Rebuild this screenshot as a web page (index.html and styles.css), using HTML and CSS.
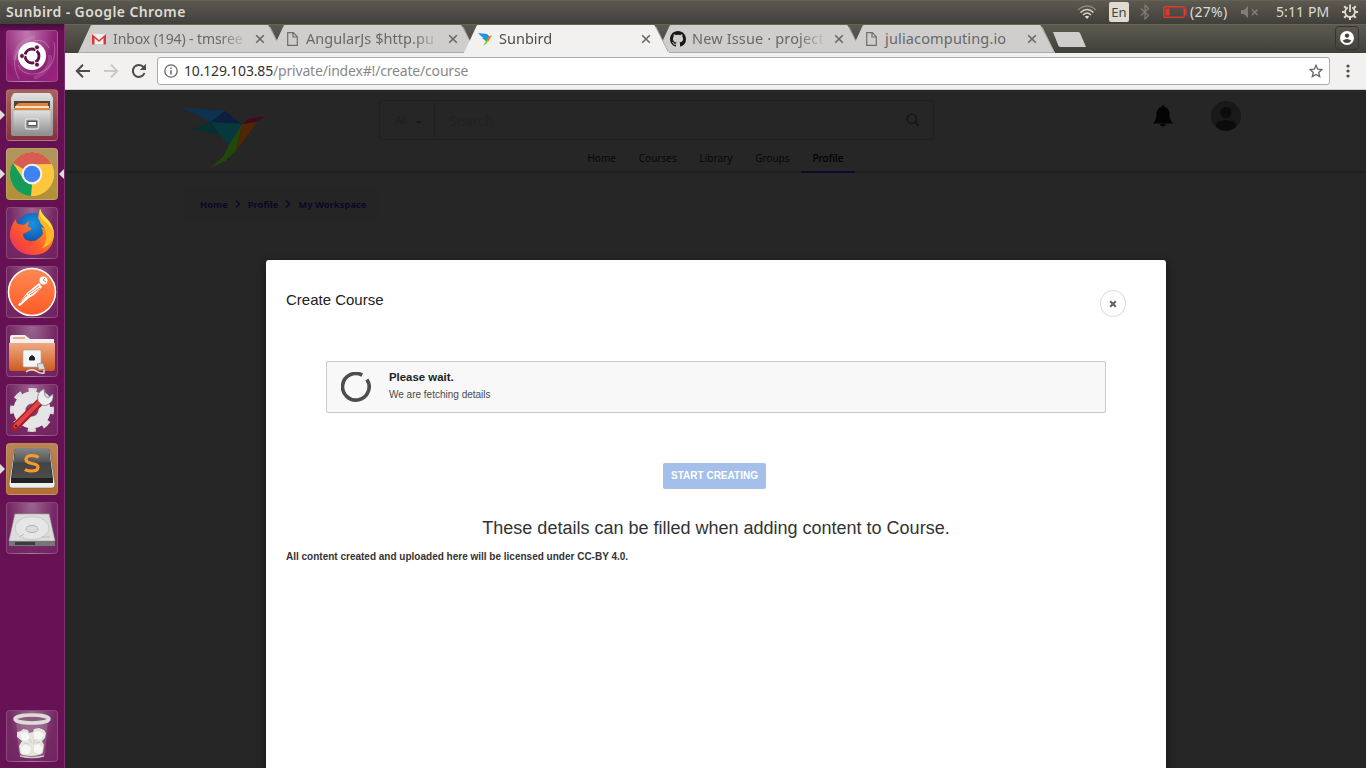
FILE: index.html
```html
<!DOCTYPE html>
<html lang="en">
<head>
<meta charset="utf-8">
<title>Sunbird</title>
<link rel="stylesheet" href="styles.css">
</head>
<body>
<svg class="defs" width="0" height="0" aria-hidden="true">
  <defs>
    <linearGradient id="metal" x1="0" y1="0" x2="0" y2="1"><stop offset="0" stop-color="#e2e2e2"/><stop offset="1" stop-color="#8d8d8d"/></linearGradient>
    <linearGradient id="orange" x1="0" y1="0" x2="0" y2="1"><stop offset="0" stop-color="#f0a880"/><stop offset="1" stop-color="#cf5a20"/></linearGradient>
    <linearGradient id="postman" x1="0" y1="0" x2="0" y2="1"><stop offset="0" stop-color="#ff8a52"/><stop offset="1" stop-color="#ff5a26"/></linearGradient>
    <linearGradient id="fox" x1="0" y1="1" x2="1" y2="0"><stop offset="0" stop-color="#e8256a"/><stop offset=".4" stop-color="#ff5a2c"/><stop offset=".75" stop-color="#ff9a1c"/><stop offset="1" stop-color="#ffe53a"/></linearGradient>
    <linearGradient id="key" x1="0" y1="0" x2="0" y2="1"><stop offset="0" stop-color="#858585"/><stop offset=".45" stop-color="#565656"/><stop offset=".5" stop-color="#444"/><stop offset="1" stop-color="#4c4c4c"/></linearGradient>
    <radialGradient id="globe" cx=".5" cy=".3" r=".7"><stop offset="0" stop-color="#1496e8"/><stop offset="1" stop-color="#123a90"/></radialGradient>
    <symbol id="x" viewBox="0 0 10 10"><path d="M1.200 1.200l7.600 7.600M8.800 1.200l-7.600 7.600" stroke="#686868" stroke-width="1.600" fill="none"/></symbol>
    <symbol id="doc" viewBox="0 0 16 16"><path d="M2.700 1.700h5.600l4 4v8.600H2.700zM8 1.700v4.300h4.300" fill="none" stroke="#6d6d6d" stroke-width="1.200"/></symbol>
    <symbol id="tab" viewBox="0 0 206 29"><path d="M0 29L12.500 2Q13 1 14 1H189.500Q190.500 1 191 2L205 29z"/><path class="edge" d="M0 28.500H204.500L192 3" fill="none"/></symbol>
    <symbol id="bird" viewBox="0 0 86 62">
      <path d="M0 0L44 4 30 15z" fill="#0f3150"/><path d="M44 4L61 17 30 15z" fill="#0d1f40"/>
      <path d="M30 15L11 22 39 28z" fill="#053034"/><path d="M30 15L61 17 48 38 39 28z" fill="#06383d"/>
      <path d="M61 17L55 44 44 54 29 61 42 50 48 38z" fill="#20480c"/><path d="M61 17L76 15 56 43z" fill="#522504"/><path d="M61 17L68 12 85 9 74 15z" fill="#48061a"/>
    </symbol>
  </defs>
</svg>

<div class="desktop">
  <header class="panel">
    <span class="panel-title">Sunbird - Google Chrome</span>
    <div class="indicators">
      <svg class="i-wifi" width="20" height="16" viewBox="0 0 20 16"><g fill="none" stroke="#d6d2c9" stroke-width="1.500"><path d="M1 6Q10-2 19 6" stroke="#8a877e"/><path d="M3.500 8.500Q10 2.500 16.500 8.500"/><path d="M6 11Q10 7 14 11"/></g><path d="M7.800 12.500Q10 10.800 12.200 12.500L10 15z" fill="#dfdbd2"/></svg>
      <span class="i-lang">En</span>
      <svg class="i-bt" width="10" height="16" viewBox="0 0 10 16"><path d="M1 4.500l7.500 7L5 15V1l3.500 3.500L1 11.500" fill="none" stroke="#817e76" stroke-width="1.200"/></svg>
      <svg class="i-bat" width="24" height="12" viewBox="0 0 24 12"><rect x=".8" y=".8" width="20.400" height="10.400" rx="1" fill="none" stroke="#df382c" stroke-width="1.400"/><path d="M21 3h2.500v6H21" fill="#df382c"/><rect x="2.500" y="2.500" width="4" height="7" fill="#df382c"/></svg>
      <span class="i-pct">(27%)</span>
      <svg class="i-vol" width="18" height="12" viewBox="0 0 18 12"><path d="M0 4h3l4-4v12L3 8H0z" fill="#817e76"/><path d="M11 3.500l5.500 5.500m0-5.500L11 9" stroke="#817e76" stroke-width="1.600"/></svg>
      <span class="i-time">5:11 PM</span>
      <svg class="i-gear" width="16" height="16" viewBox="0 0 16 16"><path d="M5.800 3.500A5 5 0 1 0 10.200 3.500" fill="none" stroke="#dfdbd2" stroke-width="1.800"/><path d="M0 8h3m10 0h3M8 13v3M2.200 2.200l2 2m7.600 7.600l2 2M2.200 13.800l2-2m7.600-7.600l2-2" stroke="#dfdbd2" stroke-width="2"/><path d="M8 .5V8" stroke="#dfdbd2" stroke-width="1.800"/></svg>
    </div>
  </header>

  <div class="workspace">
    <nav class="launcher">
      <div class="tile dash"><svg viewBox="0 0 52 52"><g fill="none" stroke="#fff" stroke-opacity=".22"><path d="M13 49Q1 25 21 13Q38 6 43 18M48 12Q52 37 33 43Q17 47 12 35" stroke-width="1.200"/><path d="M9 30Q9 12 29 7M44 25Q45 41 28 48" stroke-width="4" stroke-opacity=".13"/></g><circle cx="26" cy="26" r="14" fill="#fff"/><circle cx="26" cy="26" r="7" fill="none" stroke="#5e1445" stroke-width="2.800" stroke-dasharray="13.300 1.360" stroke-dashoffset="6"/><g fill="#5e1445" stroke="#fff" stroke-width=".7"><circle cx="16" cy="26" r="2.400"/><circle cx="31" cy="17.300" r="2.400"/><circle cx="31" cy="34.700" r="2.400"/></g></svg></div>
      <div class="tile files open"><svg viewBox="0 0 52 52"><path d="M7 5q1-1 2-1h34q1 0 2 1l2 4v36q0 2-2 2H7q-2 0-2-2V9z" fill="url(#metal)"/><path d="M8 12h36v12H8z" fill="#4b4540"/><path d="M10 16l3-2h29v8H10z" fill="#e8803a"/><path d="M9 17h34v4H9z" fill="#fbe4c4"/><path d="M8 19h36v3H8z" fill="#f08428"/><path d="M7 21h38v25H7z" fill="url(#metal)" stroke="#999" stroke-width=".6"/><rect x="19.500" y="30" width="13" height="10" rx="2" fill="#8a8a8a" stroke="#dcdcdc" stroke-width="1.500"/><rect x="22" y="32.500" width="8.500" height="4" fill="#fff" stroke="#555"/></svg></div>
      <div class="tile chrome open active"><svg viewBox="0 0 52 52"><circle cx="26" cy="26" r="22" fill="#fbc941"/><path d="M26 26L6.900 15A22 22 0 0 1 45.700 16.200H27z" fill="#d85c50"/><path d="M6.900 15L17.300 31 26 37 25 48A22 22 0 0 1 6.900 15z" fill="#169c5a"/><path d="M25 48L35 31 35 16.200H45.700A22 22 0 0 1 25 48z" fill="#fcc73c"/><circle cx="26" cy="26" r="10.300" fill="#f3f3f3"/><circle cx="26" cy="26" r="8.300" fill="#3f82f0"/></svg></div>
      <div class="tile"><svg viewBox="0 0 52 52"><circle cx="27" cy="24" r="18" fill="url(#globe)"/><path d="M34 2q1 4 5 8 10 9 9 19-2 18-20 19Q9 48 4 31 3 20 10 12q0 4 2 5l6 1 5-4-1 6q3 0 4 2l-5 3-4 2q0 6 7 7 5 1 8-2 8-5 3-12l3 1q-1-7-6-9 0-5 2-10z" fill="url(#fox)"/><path d="M34 2q1 4 5 8 10 9 9 19-3 10-12 12 8-10 2-21-5-4-5-10z" fill="#ffb52a"/><path d="M34 2q1 4 5 8 7 6 8 14l-6-8q-9-5-7-14z" fill="#ffe14a"/><path d="M12 32q7 7 16 1l-2 4q-7 5-12 1z" fill="#f64c32"/></svg></div>
      <div class="tile"><svg viewBox="0 0 52 52"><circle cx="26" cy="26" r="23.500" fill="url(#postman)" stroke="#fff" stroke-width="1.500"/><circle cx="37.500" cy="14.500" r="4" fill="#fff"/><path d="M39 12l-2 2 3 2" fill="none" stroke="#f47a48"/><path d="M33 17l3 4-8 8-5 3-9 8-2-1 8-11 2-2z" fill="#fff"/><path d="M33 20L22 28m12-6l-10 7M21 29l-7 8" stroke="#f98058" stroke-width="1"/></svg></div>
      <div class="tile"><svg viewBox="0 0 52 52"><path d="M4 12q0-2 2-2h13l5 4h24v10H4z" fill="#f3efec"/><path d="M7 13h12" stroke="#ef9a70" stroke-width="1.500"/><path d="M3 18h46v25q0 3-3 3H6q-3 0-3-3z" fill="url(#orange)"/><rect x="17" y="25" width="18" height="17" rx="1.500" fill="#f5f5f5" stroke="#aaa" stroke-width=".7"/><path d="M23.500 35v-2.500l2.500-2 2.500 2V35z" fill="#222" stroke="#222"/><path d="M20 47q5-4 10-1 4 3 8 2v-6" fill="none" stroke="#ddd" stroke-width="1.500"/><path d="M31 39l6-1 2 6-6 1z" fill="#ddd" stroke="#777" stroke-width=".6"/></svg></div>
      <div class="tile"><svg viewBox="0 0 52 52"><circle cx="26" cy="26" r="19.500" fill="none" stroke="#dedede" stroke-width="5" stroke-dasharray="8 7.315" stroke-dashoffset="4"/><circle cx="26" cy="26" r="12.500" fill="none" stroke="#e5e5e5" stroke-width="12"/><path d="M9 43L34 18" stroke="#a81d25" stroke-width="8" stroke-linecap="round"/><path d="M9.500 42L34 17.500" stroke="#df4449" stroke-width="4.500" stroke-linecap="round"/><path d="M32 17q-2-9 6-12l1 7 3 2 5-4q1 8-6 11-3 1-5 0l-4-4z" fill="#eee" stroke="#888" stroke-width=".9"/><circle cx="10" cy="42" r="1.300" fill="#7d1519"/></svg></div>
      <div class="tile sublime open"><svg viewBox="0 0 52 52"><path d="M8 8L3 41q0 4 3 4h40q3 0 3-4L44 8z" fill="#eee" stroke="#555" stroke-width=".5"/><path d="M9 6h34l4 30v4H5v-4z" fill="#222"/><path d="M11 5h30q2 0 2 2l3 28H6L9 7q0-2 2-2z" fill="url(#key)"/><path d="M32.500 14.500Q30 12.500 26 12.500q-6 0-6 4 0 3 6 4 6.500 1 6 4-.5 3.500-6 3.500-5 0-7-1.500" fill="none" stroke="#f99a2c" stroke-width="3.200"/></svg></div>
      <div class="tile"><svg viewBox="0 0 52 52"><path d="M9 12h34l6 27H3z" fill="#dcdcdc" stroke="#aaa" stroke-width=".6"/><ellipse cx="26" cy="26" rx="17" ry="11.500" fill="#e6e6e6" stroke="#c2c2c2" stroke-width=".8"/><ellipse cx="26" cy="27" rx="6" ry="3.500" fill="#ddd" stroke="#b0b0b0"/><path d="M3 39h46v5H3z" fill="#777"/><path d="M9 40h20v3H9z" fill="#3c3c3c"/><path d="M13 35l5-3m18 3h8" stroke="#bbb"/></svg></div>
      <div class="tile trash"><svg viewBox="0 0 52 52"><path d="M10 9l3 36q13 4 26 0l3-36z" fill="#dcd5dc" fill-opacity=".2"/><path d="M11 22l4-1 2-2 5 1 1 3 4-1 1-3 5-1 5 2 2 3-1 5-3 3 2 4-1 7q0 3-11 4-11 0-12-3l-1-7 3-5-5-4z" fill="#e4e4df"/><path d="M14 23l6-1 4 5-3 4-5-1zM28 22l6-1 4 4-4 5-6-2zM15 37l5-3 5 4-2 6-7 0zM28 35l5-1 4 4-3 6-6-2z" fill="#f6f6f3"/><path d="M23 29l3 4m3-3l-2 4m-9-1l4 1m8-1l4-1" stroke="#c4c4c0" stroke-width=".8" fill="none"/><ellipse cx="26" cy="9" rx="17" ry="4" fill="#8b5b82" stroke="#dcdcd8" stroke-width="3.500"/><path d="M14 46q12 3 24 0" stroke="#ccc" stroke-width="1.300" fill="none"/></svg></div>
    </nav>

    <div class="browser">
      <div class="tabstrip">
        <div class="tab"><svg class="shape"><use href="#tab"/></svg><svg class="fav gmail" viewBox="0 0 16 16"><path d="M1 3h14v10H1z" fill="#efefef"/><path d="M1 13.500V3l7 6 7-6v10.500h-2.500V7L8 11 3.500 7v6.500z" fill="#d93a35"/></svg><span class="label w1">Inbox (194) - tmsree</span><svg class="close"><use href="#x"/></svg></div>
        <div class="tab"><svg class="shape"><use href="#tab"/></svg><svg class="fav"><use href="#doc"/></svg><span class="label w2">AngularJs $http.pu</span><svg class="close"><use href="#x"/></svg></div>
        <div class="tab current"><svg class="shape"><use href="#tab"/></svg><svg class="fav" viewBox="0 0 16 16"><path d="M0 2l9 1 3 3-5 2-4-3z" fill="#238ee8"/><path d="M4 7l8-1-3 5z" fill="#13a6b4"/><path d="M11 6l-2 6-4 3 3-5z" fill="#68cf19"/><path d="M10 6l4-2-4 7z" fill="#f37316"/></svg><span class="label w3">Sunbird</span><svg class="close"><use href="#x"/></svg></div>
        <div class="tab"><svg class="shape"><use href="#tab"/></svg><svg class="fav octo" viewBox="0 0 16 16"><path fill="#181616" d="M8 0C3.580 0 0 3.580 0 8c0 3.540 2.290 6.530 5.470 7.590.4.070.55-.17.55-.38 0-.19-.01-.82-.01-1.490-2.010.37-2.530-.49-2.690-.94-.09-.23-.48-.94-.82-1.130-.28-.15-.68-.52-.01-.53.63-.01 1.080.58 1.230.82.72 1.210 1.870.87 2.330.66.07-.52.28-.87.51-1.070-1.780-.2-3.640-.89-3.640-3.950 0-.87.31-1.590.82-2.150-.08-.2-.36-1.020.08-2.120 0 0 .67-.21 2.200.82.64-.18 1.320-.27 2-.27s1.360.09 2 .27c1.530-1.040 2.200-.82 2.200-.82.44 1.100.16 1.920.08 2.120.51.56.82 1.270.82 2.150 0 3.070-1.870 3.750-3.650 3.950.29.25.54.73.54 1.480 0 1.070-.01 1.930-.01 2.200 0 .21.15.46.55.38A8.010 8.010 0 0 0 16 8c0-4.420-3.580-8-8-8z"/></svg><span class="label w4">New Issue · project-</span><svg class="close"><use href="#x"/></svg></div>
        <div class="tab"><svg class="shape"><use href="#tab"/></svg><svg class="fav"><use href="#doc"/></svg><span class="label w5">juliacomputing.io</span><svg class="close"><use href="#x"/></svg></div>
        <svg class="newtab" width="33" height="15" viewBox="0 0 33 15"><path d="M0 0H25q1 0 2 1L33 15H8q-2 0-2.500-1z" fill="#d0cecd"/></svg>
        <div class="profile-btn"><svg width="14" height="14" viewBox="0 0 14 14"><circle cx="7" cy="7" r="7" fill="#fff"/><circle cx="7" cy="4.600" r="2.200" fill="#45443e"/><path d="M2.700 9.500q4.300-3 8.600 0-1.500 2.500-4.300 2.500t-4.300-2.500z" fill="#45443e"/></svg></div>
      </div>

      <div class="toolbar">
        <svg class="nav-i" width="16" height="16" viewBox="0 0 16 16"><path d="M15 8H2.500M8 1.800L1.800 8 8 14.200" fill="none" stroke="#4c4c4c" stroke-width="2"/></svg>
        <svg class="nav-i" width="16" height="16" viewBox="0 0 16 16"><path d="M1 8h12.500M8 1.800L14.200 8 8 14.200" fill="none" stroke="#c9c9c9" stroke-width="2"/></svg>
        <svg class="nav-i" width="16" height="16" viewBox="0 0 16 16"><path d="M13.500 10A6 6 0 1 1 12.600 4.200" fill="none" stroke="#4c4c4c" stroke-width="2"/><path d="M15 .8V7H8.800z" fill="#4c4c4c"/></svg>
        <div class="omnibox">
          <svg width="14" height="14" viewBox="0 0 14 14"><circle cx="7" cy="7" r="6.200" fill="none" stroke="#666" stroke-width="1.300"/><path d="M7 6.200v4.300M7 3.400v1.500" stroke="#666" stroke-width="1.500"/></svg>
          <span class="url"><b>10.129.103.85</b>/private/index#!/create/course</span>
          <svg class="star" width="14" height="14" viewBox="0 0 14 14"><path d="M7 1.300l1.700 3.900 4.200.4-3.200 2.800 1 4.200L7 10.400l-3.700 2.200 1-4.200L1.100 5.600l4.200-.4z" fill="none" stroke="#666" stroke-width="1.300"/></svg>
        </div>
        <svg class="menu" width="4" height="14" viewBox="0 0 4 14"><g fill="#4c4c4c"><circle cx="2" cy="2" r="1.600"/><circle cx="2" cy="7" r="1.600"/><circle cx="2" cy="12" r="1.600"/></g></svg>
      </div>

      <main class="page">
        <header class="site-head">
          <svg class="logo" width="86" height="62"><use href="#bird"/></svg>
          <div class="center">
            <div class="search"><span class="all">All<i class="caret"></i></span><span class="query">Search</span><svg width="14" height="14" viewBox="0 0 14 14"><circle cx="5.800" cy="5.800" r="4.600" fill="none" stroke="#181818" stroke-width="1.800"/><path d="M9 9l4 4" stroke="#181818" stroke-width="2"/></svg></div>
            <nav class="site-nav"><a>Home</a><a>Courses</a><a>Library</a><a>Groups</a><a class="on">Profile</a></nav>
          </div>
          <svg class="bell" width="20" height="22" viewBox="0 0 20 22"><path d="M8.500 2q0-2 1.500-2t1.500 2q5 1 5 7.500 0 5 3.500 9H0q3.500-4 3.500-9Q3.500 3 8.500 2zM7 19h6q-.5 2.500-3 2.500T7 19z" fill="#040404"/></svg>
          <svg class="avatar" width="30" height="30" viewBox="0 0 30 30"><defs><clipPath id="av"><circle cx="15" cy="15" r="15"/></clipPath></defs><g clip-path="url(#av)"><path d="M0 0h30v30H0z" fill="#191919"/><circle cx="15" cy="11.500" r="5.500" fill="#0c0c0c"/><ellipse cx="15" cy="24.500" rx="10" ry="5.500" fill="#0c0c0c"/></g></svg>
        </header>
        <div class="crumbs"><span>Home</span><svg viewBox="0 0 6 8"><path d="M1 .5L4.500 4 1 7.500"/></svg><span>Profile</span><svg viewBox="0 0 6 8"><path d="M1 .5L4.500 4 1 7.500"/></svg><span>My Workspace</span></div>
        <section class="modal">
          <div class="modal-head"><h1>Create Course</h1><button class="modal-close"><svg width="8" height="8" viewBox="0 0 8 8"><path d="M1.200 1.200l5.600 5.600m0-5.600L1.200 6.800" stroke="#666" stroke-width="2.300"/></svg></button></div>
          <div class="message">
            <svg width="30" height="30" viewBox="0 0 30 30"><path d="M21.200 3.100A13.300 13.300 0 1 0 25.900 7.400" fill="none" stroke="#4d4d4d" stroke-width="3.600"/></svg>
            <div class="message-text"><strong>Please wait.</strong><p>We are fetching details</p></div>
          </div>
          <button class="start">START CREATING</button>
          <h2>These details can be filled when adding content to Course.</h2>
          <p class="license">All content created and uploaded here will be licensed under CC-BY 4.0.</p>
        </section>
      </main>
    </div>
  </div>
</div>
</body>
</html>
```
FILE: styles.css
```css
* { box-sizing: border-box; }
body { margin: 0; overflow: hidden; font-family: "Noto Sans", sans-serif; }
.defs { position: absolute; }
h1, h2, p { margin: 0; font-weight: normal; }
button { padding: 0; border: 0; font: inherit; }
svg { flex: none; display: block; }

.desktop { width: 1366px; height: 768px; display: flex; flex-direction: column; overflow: hidden; }
.panel { height: 24px; flex: none; display: flex; align-items: center; justify-content: space-between; padding: 0 8px 2px 6px; background: linear-gradient(#5b5950, #403f3a); border-top: 1px solid #65624f; color: #dfdbd2; white-space: nowrap; }
.panel-title { font-size: 14px; font-weight: 600; letter-spacing: .4px; line-height: 22px; }
.indicators { display: flex; align-items: center; font-size: 14px; line-height: 22px; }
.i-lang { width: 20px; height: 20px; margin: 0 11px 0 12px; border-radius: 2px; background: #dfdbd2; color: #45443e; font-size: 13px; line-height: 20px; text-align: center; }
.i-bat { margin-left: 13px; }
.i-pct { width: 54px; padding-left: 3px; letter-spacing: .3px; }
.i-time { width: 66px; margin-left: 17px; letter-spacing: .1px; }

.workspace { flex: 1; min-height: 0; display: flex; }
.launcher { width: 65px; flex: none; display: flex; flex-direction: column; gap: 7px; padding: 6px; background: linear-gradient(#40103a 0, #651052 7px, #661254 100%); border-right: 1px solid #803070; }
.tile { position: relative; width: 52px; height: 52px; flex: none; border: 1px solid rgba(255,255,255,.16); border-radius: 4px; background: radial-gradient(ellipse at 50% 0, rgba(255,255,255,.36), rgba(255,255,255,.1) 65%, rgba(255,255,255,.08)); }
.tile svg { width: 52px; height: 52px; margin: -1px; }
.dash { background: radial-gradient(ellipse at 40% 0, #c17ab0, #8f2075 65%, #9a2481); }
.files { background: linear-gradient(#a8625e, #85323f); }
.chrome { background: linear-gradient(#ae9660, #b39134); }
.sublime { background: linear-gradient(#b78556, #b56f30); }
.trash { margin-top: auto; }
.open::before { content: ""; position: absolute; left: -7px; top: 20px; border: 5px solid transparent; border-left-color: #ddd; border-right: 0; }
.active::after { content: ""; position: absolute; right: -7px; top: 20px; border: 5px solid transparent; border-right-color: #ddd; border-left: 0; }

.browser { flex: 1; min-width: 0; display: flex; flex-direction: column; }
.tabstrip { height: 29px; flex: none; display: flex; padding-left: 13px; background: linear-gradient(#5c5a50, #403f3a); border-top: 1px solid #67644f; }
.tab { position: relative; width: 205px; height: 29px; margin: -1px -12px 0 0; padding: 1px 0 0 14px; flex: none; display: flex; align-items: center; color: #686868; font-size: 14.500px; }
.shape { position: absolute; left: 0; top: 0; width: 206px; height: 29px; fill: #d0cecd; }
.edge { stroke: #acaaa9; }
.current { z-index: 2; color: #4c4c4c; }
.current .shape { fill: #f2f1f0; }
.current::after { content: ""; position: absolute; left: 0; right: 0; bottom: 0; height: 1px; background: #f2f1f0; }
.fav { position: relative; width: 16px; height: 16px; margin-right: 5px; }
.gmail { margin: 0 6px 0 -1px; }
.octo { margin: 0 6px 0 -1px; }
.label { position: relative; width: 133px; height: 22px; line-height: 21px; white-space: nowrap; mask-image: linear-gradient(90deg, #000 107px, transparent 135px); }
.w1 { font-size: 14px; letter-spacing: -.1px; }
.w2 { letter-spacing: .05px; }
.w4 { letter-spacing: .15px; }
.w5 { letter-spacing: .15px; mask-image: none; }
.close { position: relative; width: 10px; height: 10px; margin-left: 9px; }
.newtab { margin: 7px 0 0 10px; }
.profile-btn { width: 24px; height: 24px; margin: 1px 7px 0 auto; border: 1px solid #35342f; border-radius: 4px; display: flex; align-items: center; justify-content: center; }

.toolbar { height: 37px; flex: none; display: flex; align-items: center; padding: 0 16px 1px 10px; background: #f2f1f0; border-bottom: 1px solid #cfcdcb; }
.nav-i { margin-right: 12px; }
.omnibox { flex: 1; height: 28px; margin-left: -2px; display: flex; align-items: center; padding: 0 6px; border: 1px solid #aaa; border-radius: 3px; background: #fff; }
.url { margin-left: 6px; color: #888; font-size: 14px; letter-spacing: -.18px; line-height: 24px; white-space: nowrap; }
.url b { color: #333; font-weight: normal; }
.star { margin-left: auto; }
.menu { margin-left: 16px; }

.page { flex: 1; min-height: 0; background: #262626; overflow: hidden; }
.site-head { height: 83px; display: flex; align-items: flex-start; padding-left: 116px; border-bottom: 2px solid #202020; }
.logo { margin-top: 17px; }
.center { width: 555px; margin-left: 112px; padding-top: 10px; }
.search { height: 40px; display: flex; align-items: center; padding-right: 13px; border: 1px solid #212121; border-radius: 2px; color: #1d1d1d; font-size: 11px; }
.all { width: 55px; height: 38px; line-height: 38px; padding-left: 15px; border-right: 1px solid #212121; }
.caret { display: inline-block; margin-left: 8px; border: 3px solid transparent; border-top-color: #191919; border-bottom: 0; }
.query { flex: 1; padding-left: 14px; color: #222; font-size: 14px; }
.site-nav { display: flex; margin-left: 197px; color: #060606; font-size: 10px; line-height: 16px; }
.site-nav a { height: 33px; padding: 10px 11.450px 0; white-space: nowrap; }
.site-nav .on { color: #000; font-weight: 500; border-bottom: 2px solid #0b0b2e; }
.bell { margin: 15px 0 0 219px; }
.avatar { margin: 11px 0 0 38px; }
.crumbs { display: flex; align-items: center; height: 34px; width: 197px; margin: 14px 0 0 118px; padding-left: 17px; background: #252525; color: #090926; font-size: 9.300px; font-weight: bold; letter-spacing: .05px; white-space: nowrap; }
.crumbs svg { width: 6px; height: 8px; margin: 0 7px; fill: none; stroke: #0b0b26; stroke-width: 1.600px; }

.modal { width: 900px; height: 600px; margin: 39px 0 0 201px; padding: 30px 20px; display: flex; flex-direction: column; background: #fff; border-radius: 3px; box-shadow: 1px 3px 8px rgba(0,0,0,.5); font-family: "Liberation Sans", sans-serif; color: #333; }
.modal-head { display: flex; justify-content: space-between; padding-right: 20px; }
.modal-head h1 { color: #222; font-size: 15px; line-height: 20px; }
.modal-close { width: 26px; height: 27px; border: 1px solid #ddd; border-radius: 50%; background: #fff; display: flex; align-items: center; justify-content: center; }
.message { height: 52px; margin: 44px 40px 0; padding-left: 14px; display: flex; align-items: center; gap: 18px; background: #f8f8f8; border: 1px solid #c9c9c9; border-radius: 2px; }
.message-text { padding-bottom: 4px; }
.message strong { display: block; color: #222; font-size: 11.400px; line-height: 15px; }
.message p { padding-top: 4px; color: #4a4a4a; font-size: 10px; line-height: 12px; }
.start { width: 103px; height: 26px; margin: 50px 0 0 377px; border-radius: 2px; background: #a4c0ea; color: #fff; font-size: 10px; font-weight: bold; line-height: 26px; white-space: nowrap; }
.modal h2 { margin-top: 28px; font-size: 18px; line-height: 22px; text-align: center; }
.license { margin-top: 11px; font-size: 10px; font-weight: bold; line-height: 14px; }
```
